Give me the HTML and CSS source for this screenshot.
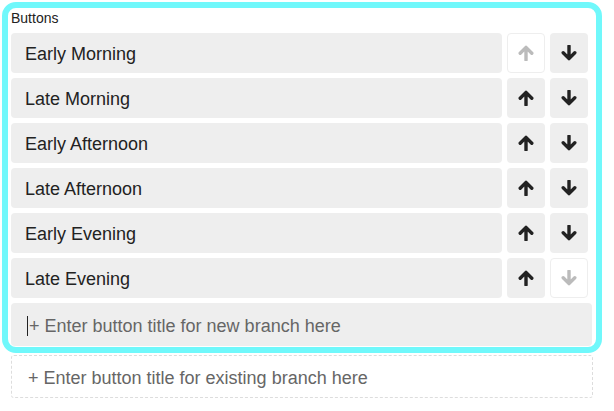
FILE: index.html
```html
<!DOCTYPE html>
<html>
<head>
<meta charset="utf-8">
<link rel="stylesheet" href="styles.css">
</head>
<body>
<div class="frame">
  <div class="label">Buttons</div>
  <div class="rows">
    <div class="row">
      <div class="title">Early Morning</div>
      <div class="btn disabled"><svg class="arr" viewBox="0 0 16 16"><path d="M2.2 8.2 8 2.4l5.8 5.8M8 3v12"/></svg></div>
      <div class="btn"><svg class="arr down" viewBox="0 0 16 16"><path d="M2.2 8.2 8 2.4l5.8 5.8M8 3v12"/></svg></div>
    </div>
    <div class="row">
      <div class="title">Late Morning</div>
      <div class="btn"><svg class="arr" viewBox="0 0 16 16"><path d="M2.2 8.2 8 2.4l5.8 5.8M8 3v12"/></svg></div>
      <div class="btn"><svg class="arr down" viewBox="0 0 16 16"><path d="M2.2 8.2 8 2.4l5.8 5.8M8 3v12"/></svg></div>
    </div>
    <div class="row">
      <div class="title">Early Afternoon</div>
      <div class="btn"><svg class="arr" viewBox="0 0 16 16"><path d="M2.2 8.2 8 2.4l5.8 5.8M8 3v12"/></svg></div>
      <div class="btn"><svg class="arr down" viewBox="0 0 16 16"><path d="M2.2 8.2 8 2.4l5.8 5.8M8 3v12"/></svg></div>
    </div>
    <div class="row">
      <div class="title">Late Afternoon</div>
      <div class="btn"><svg class="arr" viewBox="0 0 16 16"><path d="M2.2 8.2 8 2.4l5.8 5.8M8 3v12"/></svg></div>
      <div class="btn"><svg class="arr down" viewBox="0 0 16 16"><path d="M2.2 8.2 8 2.4l5.8 5.8M8 3v12"/></svg></div>
    </div>
    <div class="row">
      <div class="title">Early Evening</div>
      <div class="btn"><svg class="arr" viewBox="0 0 16 16"><path d="M2.2 8.2 8 2.4l5.8 5.8M8 3v12"/></svg></div>
      <div class="btn"><svg class="arr down" viewBox="0 0 16 16"><path d="M2.2 8.2 8 2.4l5.8 5.8M8 3v12"/></svg></div>
    </div>
    <div class="row">
      <div class="title">Late Evening</div>
      <div class="btn"><svg class="arr" viewBox="0 0 16 16"><path d="M2.2 8.2 8 2.4l5.8 5.8M8 3v12"/></svg></div>
      <div class="btn disabled"><svg class="arr down" viewBox="0 0 16 16"><path d="M2.2 8.2 8 2.4l5.8 5.8M8 3v12"/></svg></div>
    </div>
  </div>
  <div class="newbranch"><span class="caret"></span><span class="ph">+ Enter button title for new branch here</span></div>
</div>
<div class="existing"><span class="ph">+ Enter button title for existing branch here</span></div>
</body>
</html>
```
FILE: styles.css
```css
html, body {
  margin: 0;
  padding: 0;
  background: #ffffff;
  font-family: "Liberation Sans", Arial, sans-serif;
}

body {
  padding: 2px 0 0 2px;
}

.frame {
  box-sizing: border-box;
  width: 600px;
  border: 6px solid #70f8fb;
  border-radius: 14px;
  padding: 2px 4px 1px 3px;
  background: #ffffff;
}

.label {
  font-size: 14px;
  line-height: 16px;
  color: #222222;
  margin-bottom: 7px;
}

.rows {
  display: flex;
  flex-direction: column;
  gap: 5px;
  margin-right: 4px;
}

.row {
  display: flex;
  gap: 5px;
  height: 40px;
}

.title {
  box-sizing: border-box;
  flex: 1;
  display: flex;
  align-items: center;
  background: #eeeeee;
  border-radius: 4px;
  padding: 3px 0 0 14px;
  font-size: 18px;
  color: #222222;
}

.btn {
  box-sizing: border-box;
  width: 38px;
  display: flex;
  align-items: center;
  justify-content: center;
  background: #eeeeee;
  border-radius: 4px;
  stroke: #222222;
}

.btn.disabled {
  background: #ffffff;
  border: 1px solid #eeeeee;
  stroke: #bbbbbb;
}

.arr {
  width: 16px;
  height: 16px;
  fill: none;
  stroke-width: 3.4;
  stroke-linecap: round;
  stroke-linejoin: round;
}

.arr.down {
  transform: rotate(180deg);
}

.newbranch {
  box-sizing: border-box;
  margin-top: 5px;
  height: 43px;
  display: flex;
  align-items: center;
  background: #eeeeee;
  border-radius: 4px;
  padding: 3px 0 0 16px;
}

.caret {
  width: 1px;
  height: 20px;
  background: #222222;
  margin-right: 1px;
}

.ph {
  font-size: 18px;
  color: #666666;
}

.existing {
  box-sizing: border-box;
  width: 582px;
  height: 43px;
  margin: 2px 0 0 9px;
  border: 1px dashed #dddddd;
  border-radius: 3px;
  display: flex;
  align-items: center;
  padding: 3px 0 0 16px;
}
```
